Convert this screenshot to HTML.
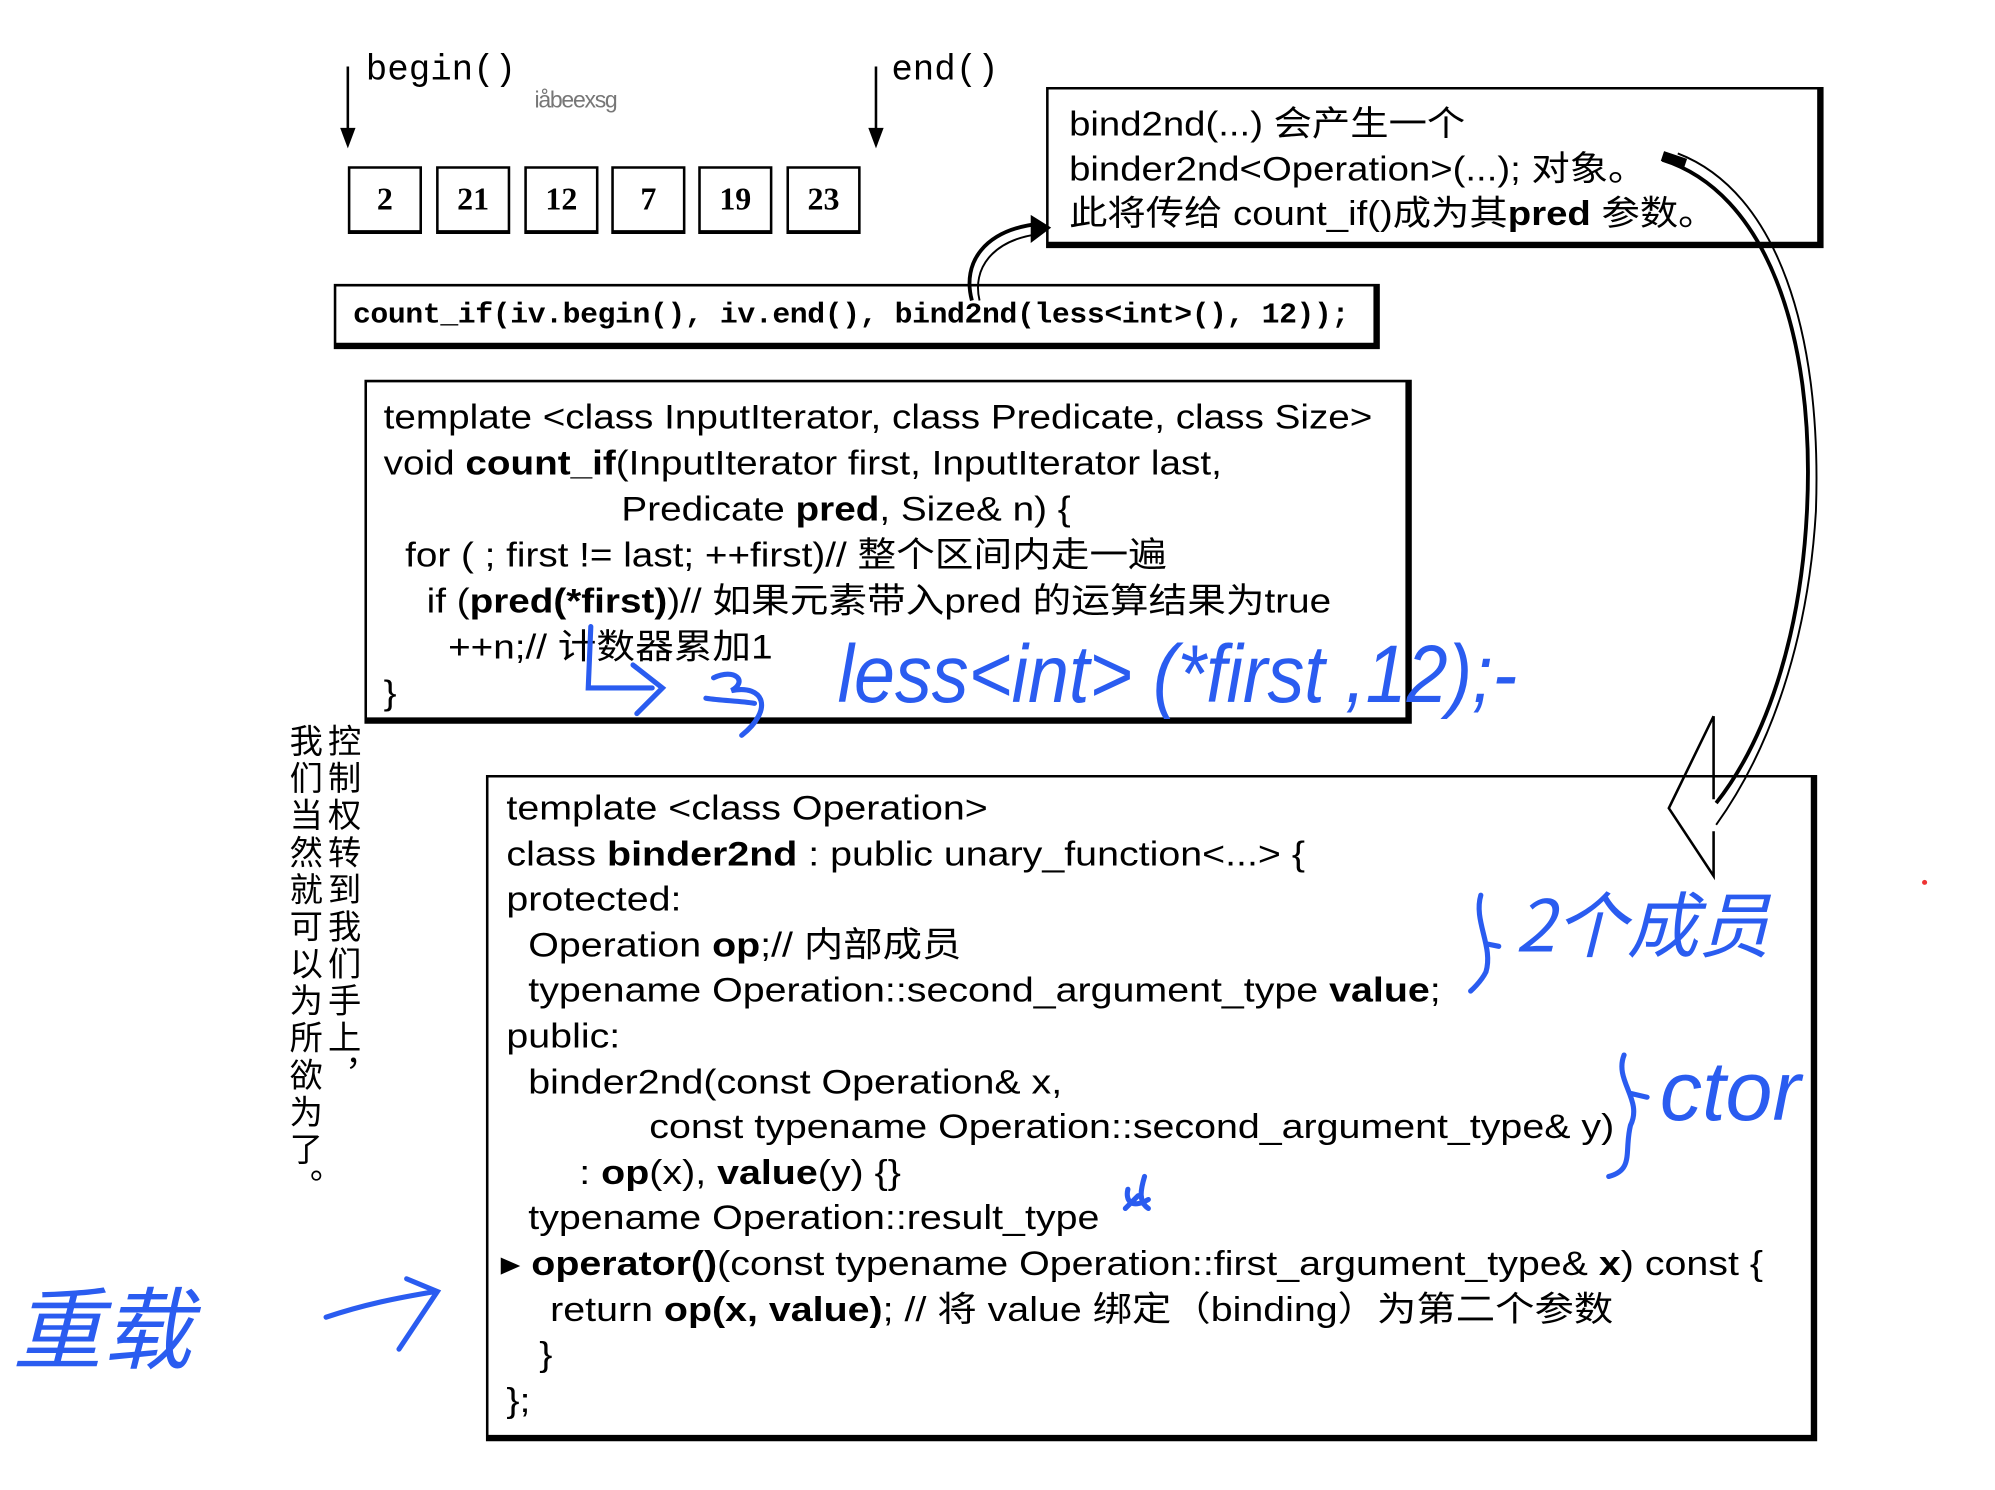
<!DOCTYPE html>
<html><head><meta charset="utf-8"><style>
html,body{margin:0;padding:0;background:#fff;width:1995px;height:1490px;overflow:hidden}
#c{position:absolute;left:0;top:0;width:1560px;height:1165px;transform:scale(1.2788);transform-origin:0 0;font-family:"Liberation Sans","Noto Sans CJK SC",sans-serif;color:#000}
.a{position:absolute;white-space:nowrap}
.box{position:absolute;border:2px solid #000;border-right:5px solid #000;border-bottom:5px solid #000;background:#fff}
.num{position:absolute;top:130px;width:54px;height:48px;border:2px solid #000;border-bottom:3px solid #000;font-family:"Liberation Serif",serif;font-weight:bold;font-size:25px;text-align:center;line-height:50px}
.code{font-size:27px;line-height:36px;transform-origin:0 0}
.mono{font-family:"Liberation Mono","DejaVu Sans Mono",monospace}
.hw{position:absolute;color:#2a5cf0;font-family:"Liberation Sans","Noto Sans CJK SC",sans-serif;white-space:nowrap}
.v{position:absolute;writing-mode:vertical-rl;font-size:26px;line-height:28px;letter-spacing:3px;font-family:"Noto Sans CJK SC",sans-serif}
</style></head><body><div id="c">

<svg class="a" style="left:0;top:0" width="1560" height="1165">
 <line x1="272" y1="52" x2="272" y2="105" stroke="#000" stroke-width="2"/>
 <polygon points="266,100 278,100 272,116" fill="#000"/>
 <line x1="685" y1="52" x2="685" y2="105" stroke="#000" stroke-width="2"/>
 <polygon points="679,100 691,100 685,116" fill="#000"/>
</svg>
<div class="a mono" style="left:286px;top:40px;font-size:28px">begin()</div>
<div class="a mono" style="left:697px;top:40px;font-size:28px">end()</div>
<div class="a" style="left:418px;top:68px;font-size:18px;color:#777;letter-spacing:-1px">iåbeexsg</div>

<div class="num" style="left:272px">2</div>
<div class="num" style="left:341px">21</div>
<div class="num" style="left:410px">12</div>
<div class="num" style="left:478px">7</div>
<div class="num" style="left:546px">19</div>
<div class="num" style="left:615px">23</div>

<div class="box" style="left:261px;top:222px;width:811px;height:44px"></div>
<div class="a mono code" style="left:276px;top:232px;font-size:22.5px;line-height:28px;font-weight:bold;letter-spacing:-0.3px;transform:scaleX(1.035)">count_if(iv.begin(), iv.end(), bind2nd(less&lt;int&gt;(), 12));</div>

<div class="box" style="left:818px;top:68px;width:601px;height:119px"></div>
<div class="a code" style="left:836px;top:80px;font-size:27px;line-height:35px;transform:scaleX(1.11)">bind2nd(...) 会产生一个<br>binder2nd&lt;Operation&gt;(...); 对象。<br>此将传给 count_if()成为其<b>pred</b> 参数。</div>

<div class="box" style="left:285px;top:297px;width:812px;height:262px"></div>
<div class="a code" style="left:300px;top:308px;transform:scaleX(1.12)">template &lt;class InputIterator, class Predicate, class Size&gt;<br>void <b>count_if</b>(InputIterator first, InputIterator last,<br><span style="padding-left:166px">Predicate <b>pred</b>, Size&amp; n) {</span><br>&nbsp; for ( ; first != last; ++first)// 整个区间内走一遍<br>&nbsp;&nbsp;&nbsp; if (<b>pred(*first)</b>)// 如果元素带入pred 的运算结果为true<br>&nbsp;&nbsp;&nbsp;&nbsp;&nbsp; ++n;// 计数器累加1<br>}</div>

<div class="box" style="left:380px;top:606px;width:1034px;height:514px"></div>
<div class="a code" style="left:396px;top:615px;line-height:35.6px;transform:scaleX(1.14)">template &lt;class Operation&gt;<br>class <b>binder2nd</b> : public unary_function&lt;...&gt; {<br>protected:<br>&nbsp; Operation <b>op</b>;// 内部成员<br>&nbsp; typename Operation::second_argument_type <b>value</b>;<br>public:<br>&nbsp; binder2nd(const Operation&amp; x,<br><span style="padding-left:98px">const typename Operation::second_argument_type&amp; y)</span><br><span style="padding-left:50px">: <b>op</b>(x), <b>value</b>(y) {}</span><br>&nbsp; typename Operation::result_type<br><span style="margin-left:-4px">▸ <b>operator()</b>(const typename Operation::first_argument_type&amp; <b>x</b>) const {</span><br>&nbsp;&nbsp;&nbsp; return <b>op(x, value)</b>; // 将 value 绑定（binding）为第二个参数<br>&nbsp;&nbsp; }<br>};</div>

<div class="v" style="left:255px;top:566px">控制权转到我们手上，</div>
<div class="v" style="left:225px;top:566px">我们当然就可以为所欲为了。</div>

<svg class="a" style="left:0;top:0" width="1560" height="1165" fill="none">
 <path d="M1300,125 C1380,150 1420,260 1413,400 C1408,500 1380,580 1342,628" stroke="#000" stroke-width="3"/>
 <path d="M1300,122 L1318,128" stroke="#000" stroke-width="8"/>
 <path d="M1312,120 C1390,150 1425,260 1420,400 C1414,500 1385,585 1342,645" stroke="#000" stroke-width="1.5"/>
 <path d="M1340,560 L1340,625 M1340,650 L1340,685 L1305,632 L1340,560" stroke="#000" stroke-width="2"/>
 <path d="M760,235 C752,205 770,180 812,175" stroke="#000" stroke-width="3"/>
 <path d="M766,235 C760,210 776,188 812,183" stroke="#000" stroke-width="1.5"/>
 <polygon points="806,168 822,178 806,190" fill="#000"/>
 <g stroke="#2a5cf0" stroke-width="4" stroke-linecap="round">
  <path d="M462,490 L460,538 L510,538 M495,520 L518,538 L498,558"/>
  <path d="M558,530 C575,522 585,533 572,540 C598,535 605,555 580,575"/>
  <path d="M552,546 C565,548 578,548 590,550"/>
  <path d="M1158,700 C1152,720 1168,740 1162,760 C1158,768 1150,775 1150,775 M1162,738 L1172,740"/>
  <path d="M1270,825 C1262,845 1285,860 1275,880 C1270,900 1278,915 1258,920 M1275,855 L1288,858"/>
  <path d="M880,945 L890,935 M882,930 C880,938 884,946 898,938 M895,920 C892,930 890,940 898,945"/>
  <path d="M255,1030 C285,1020 310,1015 340,1010 M318,1000 L342,1010 L312,1055"/>
 </g>
</svg>
<div class="hw" style="left:655px;top:490px;font-size:64px;font-style:italic;transform:scaleX(0.9);transform-origin:0 0">less&lt;int&gt; (*first ,12);-</div>
<div class="hw" style="left:1185px;top:680px;font-size:56px;font-family:'Noto Sans CJK SC',sans-serif;font-style:italic">2个成员</div>
<div class="hw" style="left:1298px;top:815px;font-size:66px;font-style:italic">ctor</div>
<div class="hw" style="left:10px;top:985px;font-size:70px;font-family:'Noto Sans CJK SC',sans-serif;font-style:italic">重载</div>
<div class="a" style="left:1503px;top:688px;width:4px;height:4px;background:#e33;border-radius:2px"></div>
</div></body></html>
